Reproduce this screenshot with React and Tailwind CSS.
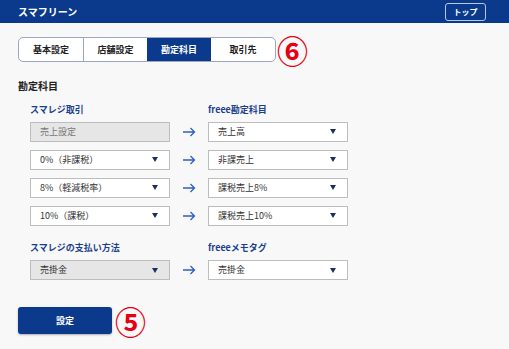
import React from "react";

const F = { fontFamily: '"Noto Sans CJK JP", "Noto Sans", sans-serif' };

function Tri() {
  return (
    <svg width="6" height="5" viewBox="0 0 6 5" className="shrink-0">
      <path d="M0 0 H6 L3 5 Z" fill="#1c2f5e" />
    </svg>
  );
}

function Arrow() {
  return (
    <svg width="14" height="10" viewBox="0 0 14 10" className="shrink-0">
      <path d="M1 5 H12.5 M8.5 1 L12.5 5 L8.5 9" stroke="#2f5fc4" strokeWidth="1.3" fill="none" />
    </svg>
  );
}

function Select({ label, disabled, grey }) {
  const bg = disabled || grey ? "bg-[#e6e6e6]" : "bg-white";
  return (
    <div className={`flex h-[20px] w-[140px] items-center justify-between border border-[#bdbdbd] ${bg} pl-[9px] pr-[11px] text-[9px] ${disabled ? "text-[#777]" : "text-[#333]"}`}>
      <span>{label}</span>
      {!disabled && <Tri />}
    </div>
  );
}

function Row({ l, r, disabled, grey }) {
  return (
    <div className="flex items-center">
      <Select label={l} disabled={disabled} grey={grey} />
      <div className="flex w-[38px] justify-center pr-[1px]"><Arrow /></div>
      <Select label={r} />
    </div>
  );
}

export default function App() {
  const tabs = ["基本設定", "店舗設定", "勘定科目", "取引先"];
  return (
    <div className="h-[349px] w-[509px] overflow-hidden bg-[#f8f8f8]" style={F}>
      <div className="flex h-[23px] items-center justify-between bg-[#0b3a8c] pl-[18px] pr-[23px]">
        <span className="text-[10px] font-bold text-white">スマフリーン</span>
        <div className="flex h-[18px] w-[41px] items-center justify-center rounded-[3px] border border-[#b8c6e0] text-[8px] font-bold text-white">トップ</div>
      </div>

      <div className="flex h-[39px] items-end pl-[18px]">
        <div className="flex h-[25px] overflow-hidden rounded-[5px] border border-[#9aa8c4] bg-white">
          {tabs.map((t, i) => (
            <div
              key={t}
              className={`flex w-[64px] items-center justify-center text-[9px] font-bold ${i === 2 ? "bg-[#0b3a8c] text-white" : "text-[#222]"} ${i === 1 ? "border-l border-[#9aa8c4]" : ""}`}
            >
              {t}
            </div>
          ))}
        </div>
        <span className="ml-[1px] h-[25px] text-[31px] font-bold leading-[25px] text-[#e60012]">⑥</span>
      </div>

      <div className="pl-[18px] pt-[16px] text-[10px] font-bold text-[#222]">勘定科目</div>

      <div className="pl-[30px] pt-[10px]">
        <div className="flex text-[9px] font-bold text-[#1c3f8c]">
          <span className="w-[178px]">スマレジ取引</span>
          <span>freee勘定科目</span>
        </div>
        <div className="mt-[5px] flex flex-col gap-[8px]">
          <Row l="売上設定" r="売上高" disabled />
          <Row l="0%（非課税）" r="非課売上" />
          <Row l="8%（軽減税率）" r="課税売上8%" />
          <Row l="10%（課税）" r="課税売上10%" />
        </div>

        <div className="mt-[15px] flex text-[9px] font-bold text-[#1c3f8c]">
          <span className="w-[178px]">スマレジの支払い方法</span>
          <span>freeeメモタグ</span>
        </div>
        <div className="mt-[6px]">
          <Row l="売掛金" r="売掛金" grey />
        </div>
      </div>

      <div className="flex h-[27px] items-center pl-[18px] mt-[27px]">
        <button className="flex h-[27px] w-[94px] items-center justify-center rounded-[3px] bg-[#0b3a8c] text-[9px] font-bold text-white shadow-[0_1px_2px_rgba(0,0,0,0.3)]">設定</button>
        <span className="ml-[3px] h-[27px] text-[31px] font-bold leading-[27px] text-[#e60012]">⑤</span>
      </div>
    </div>
  );
}
